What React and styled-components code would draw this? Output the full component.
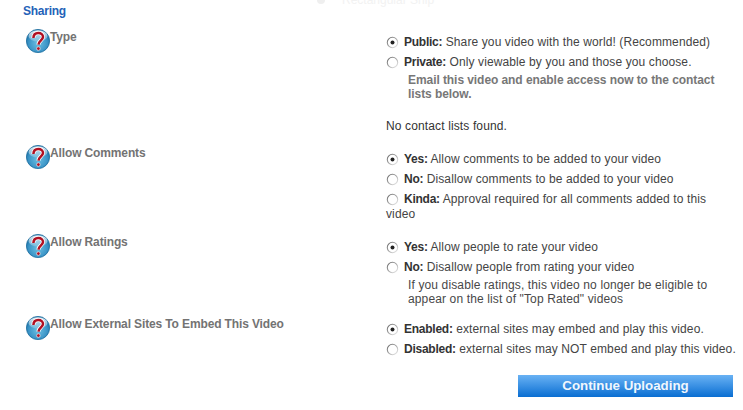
import React from 'react'
import styled, { createGlobalStyle } from "styled-components";

const GlobalStyle = createGlobalStyle`
  html, body {
    margin: 0;
    padding: 0;
    background: #fff;
  }
  body {
    font-family: "Liberation Sans", Arial, sans-serif;
    font-size: 12px;
    color: #333;
  }
`;

const Page = styled.div`
  position: relative;
  width: 743px;
  height: 410px;
  overflow: hidden;
  box-sizing: border-box;
  padding: 4px 0 0 23px;
`;

const GhostSnip = styled.div`
  position: absolute;
  top: -7px;
  left: 317px;
  display: flex;
  align-items: center;
  gap: 17px;
  color: #f2f2f2;
  font-size: 12px;
  line-height: 14px;
`;

const GhostDot = styled.span`
  width: 8px;
  height: 8px;
  border-radius: 50%;
  background: #efefef;
`;

const Heading = styled.h2`
  margin: 0;
  font-size: 12px;
  line-height: 14px;
  font-weight: 700;
  letter-spacing: -0.25px;
  color: #2462b8;
`;

const Row = styled.section`
  display: grid;
  grid-template-columns: 363px 357px;
  margin-top: ${({ $top }) => $top}px;
`;

const Label = styled.div`
  display: flex;
  align-items: flex-start;
  padding-left: 3px;
`;

const LabelText = styled.span`
  font-weight: 700;
  line-height: 14px;
  margin-top: 1px;
  letter-spacing: -0.13px;
  color: #737373;
`;

const Fields = styled.div`
  padding-top: ${({ $top }) => $top || 3}px;
`;

const Option = styled.div`
  padding: 3px 0 2px;
  line-height: 15px;
  letter-spacing: 0.11px;
  color: #444;
  b {
    color: #333;
    letter-spacing: -0.25px;
  }
`;

const RadioMark = styled.svg`
  width: 13px;
  height: 13px;
  vertical-align: -3px;
  margin-right: 5px;
`;

const Note = styled.div`
  margin: 1px 0 0 22px;
  width: 320px;
  line-height: 14px;
  letter-spacing: ${({ $strong }) => ($strong ? "-0.07px" : "0.13px")};
  color: ${({ $strong }) => ($strong ? "#777" : "#484848")};
  font-weight: ${({ $strong }) => ($strong ? 700 : 400)};
`;

const Plain = styled.p`
  margin: 18px 0 0;
  line-height: 14px;
  letter-spacing: 0.13px;
  color: #333;
`;

const Actions = styled.div`
  display: flex;
  justify-content: flex-end;
  width: 710px;
  margin-top: 16px;
`;

const SubmitButton = styled.button`
  width: 215px;
  height: 22px;
  padding: 0;
  border: 0;
  background: linear-gradient(#69b2f4, #0a6ed2);
  color: #f1f7fd;
  font-family: inherit;
  font-size: 13.3px;
  font-weight: 700;
  line-height: 22px;
`;

function HelpIcon() {
  return (
    <svg width="24" height="24" viewBox="0 0 24 24" style={{ flex: "none" }}>
      <defs>
        <radialGradient id="helpBall" cx="50%" cy="60%" r="62%">
          <stop offset="0%" stopColor="#6cc0e2" />
          <stop offset="65%" stopColor="#3a93c6" />
          <stop offset="100%" stopColor="#14689c" />
        </radialGradient>
        <linearGradient id="helpShine" x1="0" y1="0" x2="0" y2="1">
          <stop offset="0%" stopColor="#fff" stopOpacity="0.9" />
          <stop offset="100%" stopColor="#fff" stopOpacity="0.15" />
        </linearGradient>
      </defs>
      <circle cx="12" cy="12" r="11.6" fill="url(#helpBall)" stroke="#1d6d9e" strokeWidth="0.8" />
      <ellipse cx="12" cy="7" rx="9.5" ry="5.8" fill="url(#helpShine)" />
      <path d="M7.4 9C7.5 5.6 9.6 4 12.3 4c2.8 0 4.7 1.7 4.7 4 0 3.1-4.4 3.7-4.5 7.6" fill="none" stroke="#fff" strokeWidth="4" />
      <path d="M7.4 9C7.5 5.6 9.6 4 12.3 4c2.8 0 4.7 1.7 4.7 4 0 3.1-4.4 3.7-4.5 7.6" fill="none" stroke="#b01022" strokeWidth="2.5" />
      <circle cx="12.4" cy="19.6" r="1.8" fill="#b01022" stroke="#fff" strokeWidth="0.6" />
    </svg>
  );
}

function Radio({ checked }) {
  return (
    <RadioMark viewBox="0 0 13 13">
      <defs>
        <linearGradient id="radioEdge" x1="0" y1="0" x2="1" y2="1">
          <stop offset="0%" stopColor="#666" />
          <stop offset="50%" stopColor="#aaa" />
          <stop offset="100%" stopColor="#f0f0f0" />
        </linearGradient>
      </defs>
      <circle cx="6.5" cy="6.5" r="5.2" fill="#fff" stroke="url(#radioEdge)" strokeWidth="1.1" />
      {checked && <circle cx="6.5" cy="6.5" r="2" fill="#222" />}
    </RadioMark>
  );
}

function Choice({ checked, name, children }) {
  return (
    <Option>
      <Radio checked={checked} />
      <b>{name}</b> {children}
    </Option>
  );
}

function Field({ title, top, fieldsTop, children }) {
  return (
    <Row $top={top}>
      <Label>
        <HelpIcon />
        <LabelText>{title}</LabelText>
      </Label>
      <Fields $top={fieldsTop}>{children}</Fields>
    </Row>
  );
}

export default function App() {
  return (
    <>
      <GlobalStyle />
      <Page>
        <GhostSnip>
          <GhostDot />
          <span>Rectangular Snip</span>
        </GhostSnip>
        <Heading>Sharing</Heading>
        <Field title="Type" top={11}>
          <Choice checked name="Public:">Share you video with the world! (Recommended)</Choice>
          <Choice name="Private:">Only viewable by you and those you choose.</Choice>
          <Note $strong>Email this video and enable access now to the contact lists below.</Note>
          <Plain>No contact lists found.</Plain>
        </Field>
        <Field title="Allow Comments" top={12} fieldsTop={4}>
          <Choice checked name="Yes:">Allow comments to be added to your video</Choice>
          <Choice name="No:">Disallow comments to be added to your video</Choice>
          <Choice name="Kinda:">Approval required for all comments added to this<br />video</Choice>
        </Field>
        <Field title="Allow Ratings" top={10}>
          <Choice checked name="Yes:">Allow people to rate your video</Choice>
          <Choice name="No:">Disallow people from rating your video</Choice>
          <Note>If you disable ratings, this video no longer be eligible to appear on the list of "Top Rated" videos</Note>
        </Field>
        <Field title="Allow External Sites To Embed This Video" top={10}>
          <Choice checked name="Enabled:">external sites may embed and play this video.</Choice>
          <Choice name="Disabled:">external sites may NOT embed and play this video.</Choice>
        </Field>
        <Actions>
          <SubmitButton>Continue Uploading</SubmitButton>
        </Actions>
      </Page>
    </>
  );
}
